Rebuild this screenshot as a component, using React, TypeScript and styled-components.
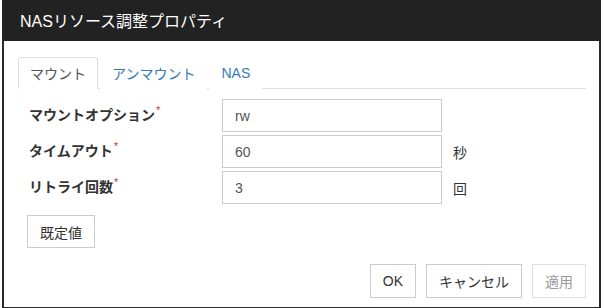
import React from "react";
import styled, { createGlobalStyle } from "styled-components";

// TYPES
interface FieldRow {
  label: string;
  value: string;
  unit?: string;
}

const GlobalStyle = createGlobalStyle`
  html, body {
    margin: 0;
    padding: 0;
    background: #ffffff;
  }
  body {
    font-family: "Liberation Sans", "Noto Sans CJK JP", sans-serif;
    font-size: 14px;
    color: #333333;
  }
`;

const PageStyled = styled.div`
  padding-left: 2px;
  width: 602px;
  height: 308px;
  box-sizing: border-box;
`;

const DialogStyled = styled.section`
  width: 599px;
  box-sizing: border-box;
  border: 2px solid #2b2b2b;
  border-top: none;
  background: #ffffff;
`;

const HeaderStyled = styled.header`
  height: 41px;
  margin: 0 -2px;
  padding-left: 18px;
  display: flex;
  align-items: center;
  background: #222222;
  color: #ffffff;
  font-size: 16px;
  padding-bottom: 1px;
  box-sizing: border-box;
`;

const BodyStyled = styled.div`
  padding: 16px 13px 9px 14px;
`;

const TabListStyled = styled.nav`
  display: flex;
  height: 32px;
  border-bottom: 1px solid #dddddd;
  box-sizing: border-box;
`;

const TabStyled = styled.button<{ $active?: boolean }>`
  all: unset;
  height: 32px;
  box-sizing: border-box;
  padding: 0 11px;
  margin-right: 2px;
  display: flex;
  align-items: center;
  font-size: 14px;
  border: 1px solid ${(p) => (p.$active ? "#dddddd" : "transparent")};
  border-bottom-color: ${(p) => (p.$active ? "#ffffff" : "transparent")};
  border-radius: 3px 3px 0 0;
  background: #ffffff;
  color: ${(p) => (p.$active ? "#555555" : "#337ab7")};
`;

const FormStyled = styled.div`
  margin-top: 10px;
  padding-left: 10px;
  display: flex;
  flex-direction: column;
  gap: 3px;
`;

const RowStyled = styled.div`
  display: flex;
  align-items: center;
  height: 33px;
`;

const LabelStyled = styled.label`
  width: 193px;
  padding-left: 1px;
  padding-bottom: 3px;
  font-weight: bold;
  color: #333333;
`;

const RequiredStyled = styled.sup`
  color: #c0392b;
  font-size: 11px;
  font-weight: normal;
  margin-left: 1px;
`;

const InputStyled = styled.input`
  width: 220px;
  height: 33px;
  box-sizing: border-box;
  padding: 0 12px;
  border: 1px solid #cccccc;
  font-family: inherit;
  font-size: 14px;
  color: #555555;
  outline: none;
`;

const UnitStyled = styled.span`
  margin-left: 11px;
  color: #333333;
`;

const ButtonStyled = styled.button<{ $disabled?: boolean }>`
  height: ${(p) => (p.$disabled ? "34px" : "34px")};
  box-sizing: border-box;
  padding: 0 12px;
  background: #ffffff;
  border: 1px solid ${(p) => (p.$disabled ? "#e0e0e0" : "#cccccc")};
  border-radius: 0;
  font-family: inherit;
  font-size: 14px;
  color: ${(p) => (p.$disabled ? "#9a9a9a" : "#333333")};
`;

const DefaultButtonStyled = styled(ButtonStyled)`
  height: 33px;
  margin-top: 8px;
  align-self: flex-start;
  margin-left: -1px;
`;

const FooterStyled = styled.footer`
  margin-top: 16px;
  display: flex;
  justify-content: flex-end;
  gap: 10px;
`;

const rows: FieldRow[] = [
  { label: "マウントオプション", value: "rw" },
  { label: "タイムアウト", value: "60", unit: "秒" },
  { label: "リトライ回数", value: "3", unit: "回" },
];

const App: React.FC = () => {
  return (
    <PageStyled>
      <GlobalStyle />
      <DialogStyled>
        <HeaderStyled>NASリソース調整プロパティ</HeaderStyled>
        <BodyStyled>
          <TabListStyled>
            <TabStyled $active>マウント</TabStyled>
            <TabStyled>アンマウント</TabStyled>
            <TabStyled>NAS</TabStyled>
          </TabListStyled>

          <FormStyled>
            {rows.map((row) => (
              <RowStyled key={row.label}>
                <LabelStyled>
                  {row.label}
                  <RequiredStyled>*</RequiredStyled>
                </LabelStyled>
                <InputStyled defaultValue={row.value} />
                {row.unit && <UnitStyled>{row.unit}</UnitStyled>}
              </RowStyled>
            ))}
            <DefaultButtonStyled>既定値</DefaultButtonStyled>
          </FormStyled>

          <FooterStyled>
            <ButtonStyled>OK</ButtonStyled>
            <ButtonStyled>キャンセル</ButtonStyled>
            <ButtonStyled $disabled disabled>
              適用
            </ButtonStyled>
          </FooterStyled>
        </BodyStyled>
      </DialogStyled>
    </PageStyled>
  );
};

export default App;
